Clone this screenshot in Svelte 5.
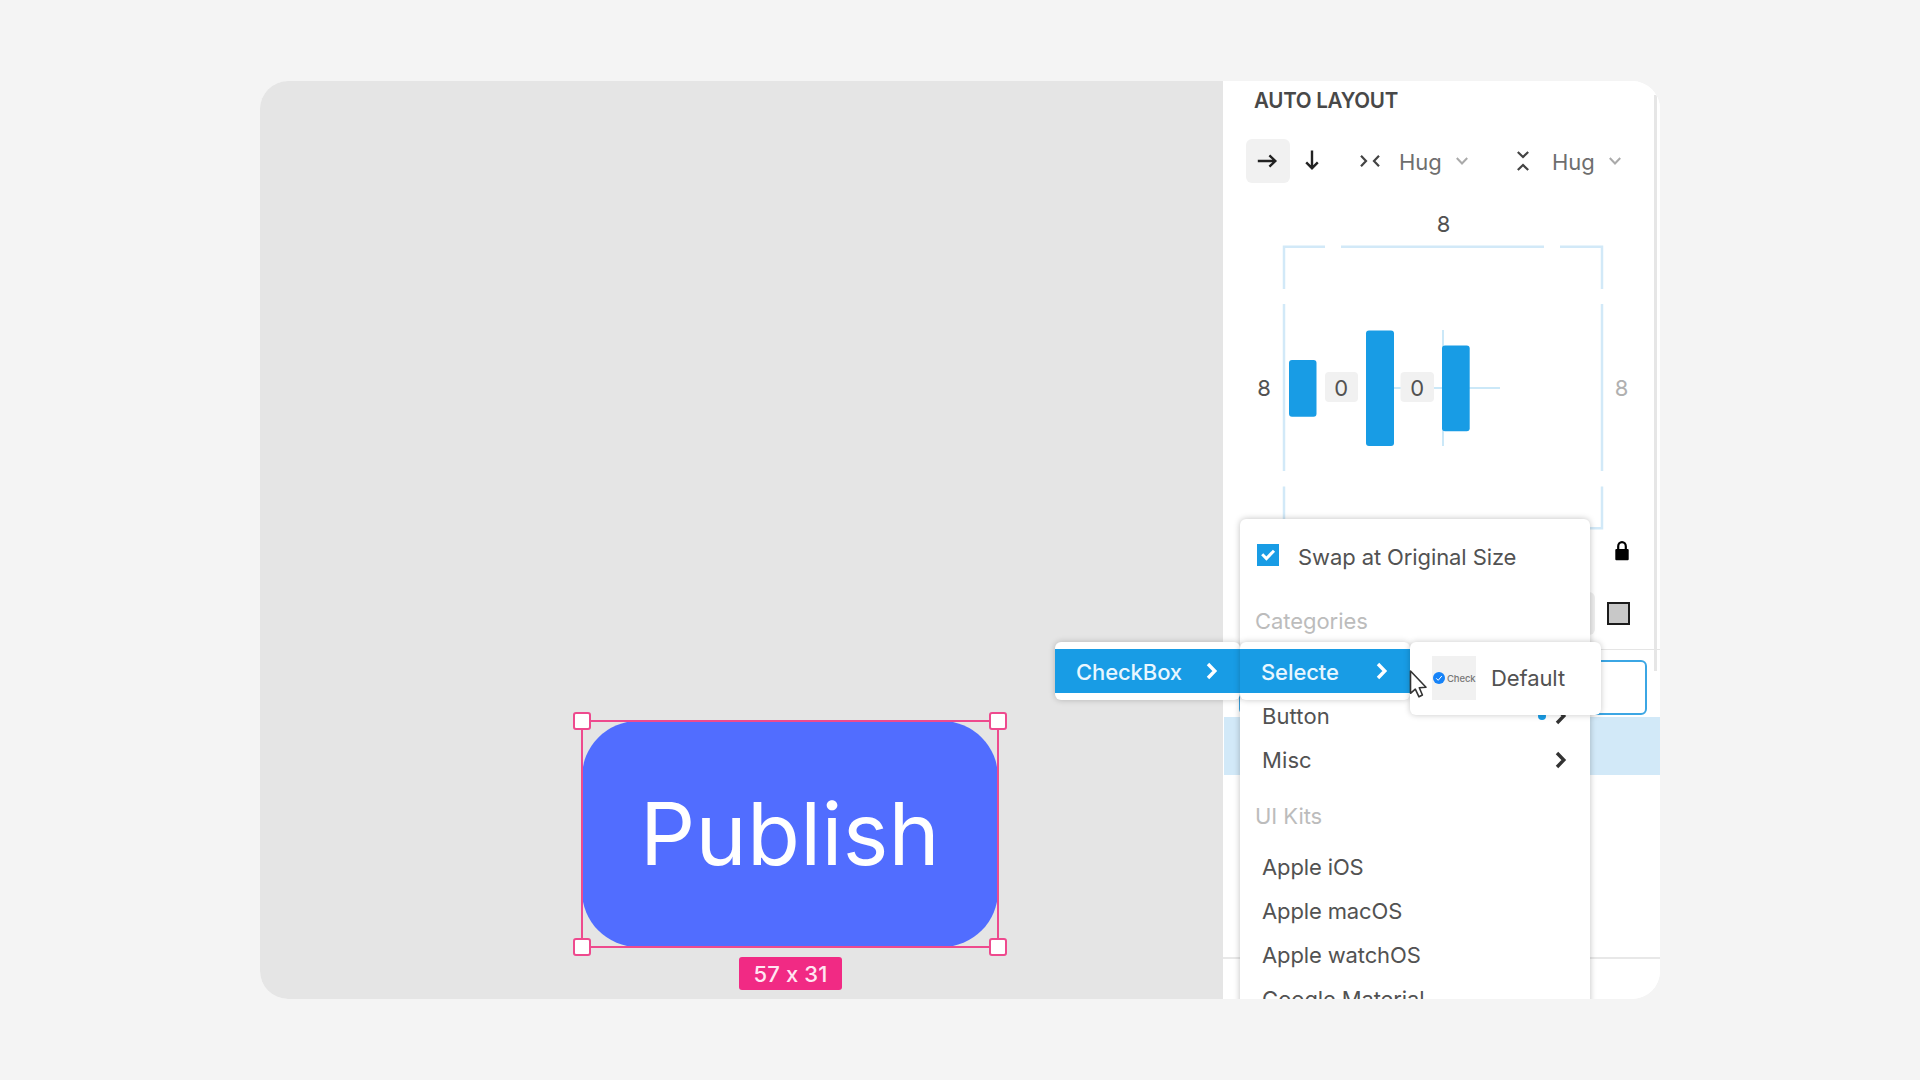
<script>
  const categories = ['Button', 'Misc'];
  const kits = ['Apple iOS', 'Apple macOS', 'Apple watchOS', 'Google Material'];
  const frameLines =
    'M1325 246.7H1284V289M1341 246.7H1544M1560 246.7H1602V289M1284 304V471M1602 304V471M1284 486.5V528.3H1325M1341 528.3H1544M1560 528.3H1602V486.5';
  const corners = ['tl', 'tr', 'bl', 'br'];
</script>

{#snippet chevron()}
  <svg class="chevron" viewBox="0 0 12 18" width="12" height="18">
    <path d="M2 2 L8.8 9 L2 16" />
  </svg>
{/snippet}

{#snippet caret()}
  <svg class="caret" viewBox="0 0 12 8" width="12" height="8"><path d="M.8 1 L6 6.5 L11.2 1" /></svg>
{/snippet}

<main>
  <div class="card">
    <section class="canvas">
      <div class="selection">
        <div class="publish"><span>Publish</span></div>
        <div class="outline"></div>
        {#each corners as c}<i class="handle {c}"></i>{/each}
        <div class="size">57 x 31</div>
      </div>
    </section>

    <aside class="panel">
      <h2>AUTO LAYOUT</h2>
      <div class="toolbar">
        <button class="active" aria-label="Horizontal">
          <svg viewBox="0 0 20 16" width="20" height="16"><path d="M.8 8H18.2M12.4 2.4L18.3 8L12.4 13.6" /></svg>
        </button>
        <button class="down" aria-label="Vertical">
          <svg viewBox="0 0 16 20" width="16" height="20"><path d="M8 .5V18M2.2 12.4L8 18.2L13.8 12.4" /></svg>
        </button>
        <div class="hug">
          <svg class="icon" viewBox="0 0 20 12" width="20" height="12"><path d="M1 .8L6 6L1 11.2M19 .8L14 6L19 11.2" /></svg>
          <span>Hug</span>{@render caret()}
        </div>
        <div class="hug vertical">
          <svg class="icon" viewBox="0 0 12 20" width="12" height="20"><path d="M.8 1L6 6L11.2 1M.8 19L6 14L11.2 19" /></svg>
          <span>Hug</span>{@render caret()}
        </div>
      </div>

      <svg class="diagram" viewBox="1223 183 431 348" width="431" height="348">
        <path class="lines" d={frameLines} />
        <path class="axis" d="M1443 330V446M1394 388H1500" />
        <rect class="bar" x="1289" y="360" width="27.5" height="56.7" rx="3" />
        <rect class="bar" x="1366" y="330.5" width="28" height="115.5" rx="3" />
        <rect class="bar" x="1442" y="345.5" width="27.7" height="85.7" rx="3" />
        <rect class="gap" x="1325" y="372" width="33" height="30" rx="4" />
        <rect class="gap" x="1400.5" y="372" width="33.5" height="30" rx="4" />
        <text x="1443.5" y="232.3">8</text>
        <text x="1264" y="396">8</text>
        <text x="1341.3" y="396">0</text>
        <text x="1417.2" y="396">0</text>
        <text class="muted" x="1621.5" y="396">8</text>
      </svg>

      <div class="row lock">
        <svg viewBox="0 0 14 20" width="14" height="20">
          <path class="shackle" d="M3.2 9V5.2A3.8 4 0 0 1 10.8 5.2V9" /><rect x="0.3" y="8" width="13.4" height="11.3" rx="1" />
        </svg>
      </div>
      <div class="row fill"><b class="field"></b><b class="swatch"></b></div>
      <div class="block"><div class="input"></div></div>
      <div class="picked"></div>
      <div class="rest"></div>
      <div class="scrollbar"></div>
    </aside>

    <div class="menu">
      <div class="swap">
        <svg viewBox="0 0 22 22" width="22" height="22"><rect width="22" height="22" /><path d="M5.2 10.3L9.4 14.5L17 6.7" /></svg>
        <span>Swap at Original Size</span>
      </div>
      <div class="heading first">Categories</div>
      {#each categories as name}
        <div class="item">
          <span>{name}</span>
          {#if name === 'Button'}<em></em>{/if}
          {@render chevron()}
        </div>
      {/each}
      <div class="heading second">UI Kits</div>
      {#each kits as name}<div class="item kit"><span>{name}</span></div>{/each}
    </div>

    <div class="sub one"><div><span>CheckBox</span>{@render chevron()}</div></div>
    <div class="sub two"><div><span>Selecte</span>{@render chevron()}</div></div>
    <div class="sub three">
      <div class="thumb">
        <svg viewBox="0 0 12 12" width="12" height="12"><circle cx="6" cy="6" r="6" /><path d="M3.2 6.3L5.2 8.3L8.8 4" /></svg>
        <span>Check</span>
      </div>
      <span class="default">Default</span>
    </div>
    <svg class="cursor" viewBox="0 0 20 30" width="20" height="30">
      <path d="M1.5 1V23.3L6.3 19.2L10 26.8L13.4 25L10.3 17.8L17 17.2Z" />
    </svg>
  </div>
</main>

<style>
  :global(body) { background: #f4f4f4; }
  main {
    width: 1920px; height: 1080px; box-sizing: border-box; padding: 81px 260px;
    background: #f4f4f4; overflow: hidden;
    font-family: Inter, 'Liberation Sans', sans-serif; font-size: 22px; color: #525252;
  }
  .card { position: relative; display: flex; width: 1400px; height: 918px; border-radius: 28px; overflow: hidden; background: #fff; }
  .canvas { position: relative; width: 963px; background: #e5e5e5; }
  svg { display: block; flex: none; overflow: visible; }
  path { fill: none; }
  span { white-space: nowrap; }

  .selection { position: absolute; left: 321px; top: 639px; width: 418px; height: 228px; }
  .publish {
    width: 416px; height: 226px; margin: 1px; border-radius: 56px; background: #516dff;
    display: flex; align-items: center; justify-content: center; color: #fff; font-size: 86.5px; letter-spacing: .3px;
  }
  .publish span { margin-top: -1px; }
  .outline { position: absolute; inset: 0; border: 2px solid #ee4a8e; box-sizing: border-box; }
  .handle { position: absolute; width: 18px; height: 18px; box-sizing: border-box; background: #fff; border: 2px solid #ee4a8e; border-radius: 3px; }
  .tl { left: -8px; top: -8px; }
  .tr { right: -8px; top: -8px; }
  .bl { left: -8px; bottom: -8px; }
  .br { right: -8px; bottom: -8px; }
  .size {
    position: absolute; left: 158px; top: 237px; width: 103px; height: 33px; border-radius: 3px;
    background: #f12a84; color: #ffe6f2; line-height: 35px; text-align: center; font-weight: 500; letter-spacing: .1px;
  }

  .panel { position: relative; display: flex; flex-direction: column; width: 437px; background: #fff; }
  h2 {
    margin: 0 0 0 31px; height: 39px; line-height: 39px; font-size: 22px; font-weight: 600; color: #484848;
    letter-spacing: -.3px; transform: scaleX(.935); transform-origin: 0 50%;
  }
  .toolbar { display: flex; align-items: center; height: 44px; margin-top: 19px; padding-left: 23px; }
  button { width: 44px; height: 44px; padding: 0; border: 0; border-radius: 6px; background: none; display: flex; align-items: center; justify-content: center; }
  button svg { margin-right: 2px; }
  button path { stroke: #222; stroke-width: 2.4; }
  .active { background: #f1f1f1; }
  .down { padding-bottom: 2px; }
  .down svg { margin-right: 0; }
  .hug { display: flex; align-items: center; margin-left: 26px; color: #6e6e6e; }
  .hug span { margin-left: 19px; width: 42px; line-height: 46px; padding-top: 1px; letter-spacing: -.1px; }
  .icon path { stroke: #444; stroke-width: 2.2; }
  .caret { margin-left: 15px; }
  .caret path { stroke: #aaa; stroke-width: 2; }
  .vertical { margin-left: 49px; }
  .vertical span { margin-left: 23px; }

  .lines { stroke: #d2e9f8; stroke-width: 2.5; }
  .axis { stroke: #cbe8f8; stroke-width: 2; }
  .bar { fill: #189ce5; }
  .gap { fill: #f1f1f1; }
  text { fill: #525252; text-anchor: middle; font-size: 22px; }
  .muted { fill: #b0b0b0; }

  .row { display: flex; justify-content: flex-end; align-items: center; box-sizing: border-box; }
  .lock { height: 40px; padding-right: 31px; }
  .shackle { stroke: #000; stroke-width: 2.2; }
  .fill { height: 79px; padding: 6px 30px 0 0; border-bottom: 1px solid #e5e5e5; gap: 12px; }
  .field { width: 355px; height: 43px; background: #eee; border-radius: 6px; }
  .swatch { width: 19px; height: 19px; border: 2px solid #1b1b1b; background: #c8c8c8; }
  .block { height: 67px; box-sizing: border-box; padding: 10px 13px 0 16px; }
  .input { height: 55px; box-sizing: border-box; border: 2px solid #3ba6e4; border-radius: 6px; }
  .picked { height: 58px; margin-left: 1px; background: #d2e9f8; }
  .rest { height: 182px; border-bottom: 2px solid #e8e8e8; }
  .scrollbar { position: absolute; left: 431px; top: 14px; width: 3px; height: 576px; background: #e6e6e6; }

  .menu {
    position: absolute; left: 980px; top: 438px; width: 350px; height: 520px; box-sizing: border-box;
    border-radius: 6px; background: #fff; box-shadow: 0 0 6px rgba(0, 0, 0, .25);
  }
  .swap { display: flex; align-items: center; height: 74px; padding: 0 0 0 17px; }
  .swap svg { margin-bottom: 2px; }
  .swap rect { fill: #189ce5; }
  .swap path { stroke: #fff; stroke-width: 3; }
  .swap span { margin-left: 19px; padding-top: 2px; letter-spacing: -.1px; }
  .heading { padding-left: 15px; color: #bcbcbc; height: 44px; line-height: 44px; }
  .first { margin: 6px 0 51px; letter-spacing: -.05px; }
  .second { margin: 12px 0 7px; letter-spacing: -.05px; }
  .item { display: flex; align-items: center; height: 44px; padding: 0 23px 0 22px; }
  .item span { flex: 1; letter-spacing: .1px; }
  .kit span { letter-spacing: -.13px; }
  .item em { width: 8px; height: 8px; border-radius: 50%; background: #189ce5; margin-right: 9px; }
  .chevron path { stroke: #333; stroke-width: 3.4; }

  .sub { position: absolute; top: 561px; height: 58px; box-sizing: border-box; padding: 7px 0; background: #fff; border-radius: 6px; box-shadow: 0 0 6px rgba(0, 0, 0, .22); }
  .one { left: 795px; width: 185px; }
  .two { left: 980px; width: 170px; }
  .sub > div:not(.thumb) { display: flex; align-items: center; justify-content: space-between; height: 44px; padding: 0 22px 0 21px; background: #189ce5; color: #e8f7ff; font-weight: 500; letter-spacing: -.1px; }
  .sub > div:not(.thumb) span { padding-top: 2px; }
  .sub .chevron path { stroke: #fff; }
  .three { left: 1150px; width: 191px; height: 73px; padding: 0 0 1px 22px; display: flex; align-items: center; }
  .thumb { display: flex; align-items: center; width: 44px; height: 44px; background: #f1f1f1; box-sizing: border-box; padding-left: 1px; overflow: hidden; }
  .thumb circle { fill: #1683f8; }
  .thumb path { stroke: #fff; stroke-width: 1; }
  .thumb span { font-size: 9.5px; margin-left: 2px; color: #777; font-weight: 500; letter-spacing: -.1px; }
  .default { margin-left: 15px; letter-spacing: -.1px; }
  .cursor { position: absolute; left: 1149px; top: 589px; }
  .cursor path { fill: #fff; stroke: #333; stroke-width: 1.6; stroke-linejoin: round; }
</style>
